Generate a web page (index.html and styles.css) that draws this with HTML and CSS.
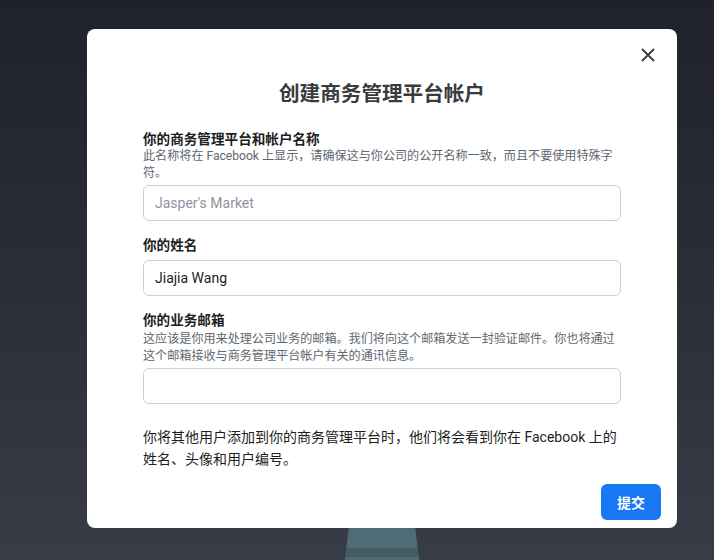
FILE: index.html
```html
<!DOCTYPE html>
<html lang="zh-CN">
<head>
<meta charset="utf-8">
<link rel="stylesheet" href="styles.css">
</head>
<body>
<div class="stage">
  <div class="stand"><div class="stand-band"></div></div>
  <div class="modal">
    <button class="close" aria-label="关闭">
      <svg width="14" height="14" viewBox="0 0 14 14"><path d="M1 1L13 13M13 1L1 13" stroke="#3a3b3c" stroke-width="1.8" fill="none"/></svg>
    </button>
    <div class="body">
      <h1 class="title">创建商务管理平台帐户</h1>
      <div class="field first">
        <div class="label">你的商务管理平台和帐户名称</div>
        <div class="help">此名称将在 Facebook 上显示，请确保这与你公司的公开名称一致，而且不要使用特殊字符。</div>
        <div class="input placeholder">Jasper's Market</div>
      </div>
      <div class="field">
        <div class="label">你的姓名</div>
        <div class="input value gap">Jiajia Wang</div>
      </div>
      <div class="field">
        <div class="label">你的业务邮箱</div>
        <div class="help spaced">这应该是你用来处理公司业务的邮箱。我们将向这个邮箱发送一封验证邮件。你也将通过这个邮箱接收与商务管理平台帐户有关的通讯信息。</div>
        <div class="input"></div>
      </div>
      <p class="note">你将其他用户添加到你的商务管理平台时，他们将会看到你在 Facebook 上的姓名、头像和用户编号。</p>
    </div>
    <div class="footer">
      <button class="submit">提交</button>
    </div>
  </div>
</div>
</body>
</html>
```

FILE: styles.css
```css
* { box-sizing: border-box; }
html, body { margin: 0; padding: 0; }
body {
  width: 714px;
  height: 560px;
  overflow: hidden;
  background: linear-gradient(180deg, #1f222a 0%, #2b2f38 55%, #383c46 100%);
  font-family: Roboto, "Noto Sans CJK SC", sans-serif;
  color: #1c1e21;
}
.stage {
  position: relative;
  width: 714px;
  height: 560px;
  padding: 29px 0 0 87px;
}
.stand {
  position: absolute;
  left: 345px;
  top: 526px;
  width: 74px;
  height: 34px;
  background: #4f6b76;
  clip-path: polygon(4px 0, 70px 0, 74px 34px, 0 34px);
}
.stand-band {
  position: absolute;
  left: 0;
  right: 0;
  top: 22px;
  height: 9px;
  background: #445b64;
}
.modal {
  position: relative;
  width: 590px;
  height: 499px;
  background: #fff;
  border-radius: 8px;
}
.close {
  position: absolute;
  top: 18px;
  right: 21px;
  width: 16px;
  height: 16px;
  padding: 1px;
  border: 0;
  background: none;
  display: flex;
  align-items: center;
  justify-content: center;
}
.body {
  padding: 51px 56px 0;
}
.title {
  margin: 0;
  text-align: center;
  font-size: 20.6px;
  line-height: 28px;
  font-weight: 700;
  color: #3a3b3c;
}
.field { margin-top: 16px; }
.field.first { margin-top: 23px; }
.label {
  font-size: 13.6px;
  line-height: 16px;
  font-weight: 700;
  color: #1c1e21;
}
.help {
  font-size: 12.1px;
  line-height: 16.5px;
  color: #606770;
  margin-top: 1px;
}
.help.spaced { margin-top: 3px; }
.input {
  margin-top: 4px;
  height: 36px;
  border: 1px solid #ccd0d5;
  border-radius: 6px;
  padding: 0 11px;
  font-size: 14px;
  line-height: 34px;
}
.input.gap { margin-top: 7px; }
.placeholder { color: #8d949e; }
.value { color: #1c1e21; }
.note {
  margin: 22px 0 0;
  font-size: 14px;
  line-height: 22px;
  color: #1c1e21;
  padding-right: 4px;
}
.footer {
  display: flex;
  justify-content: flex-end;
  padding: 14px 16px 0;
}
.submit {
  width: 60px;
  height: 36px;
  border: 0;
  border-radius: 6px;
  background: #1877f2;
  color: #fff;
  font-family: Roboto, "Noto Sans CJK SC", sans-serif;
  font-size: 14px;
  font-weight: 700;
}
```
